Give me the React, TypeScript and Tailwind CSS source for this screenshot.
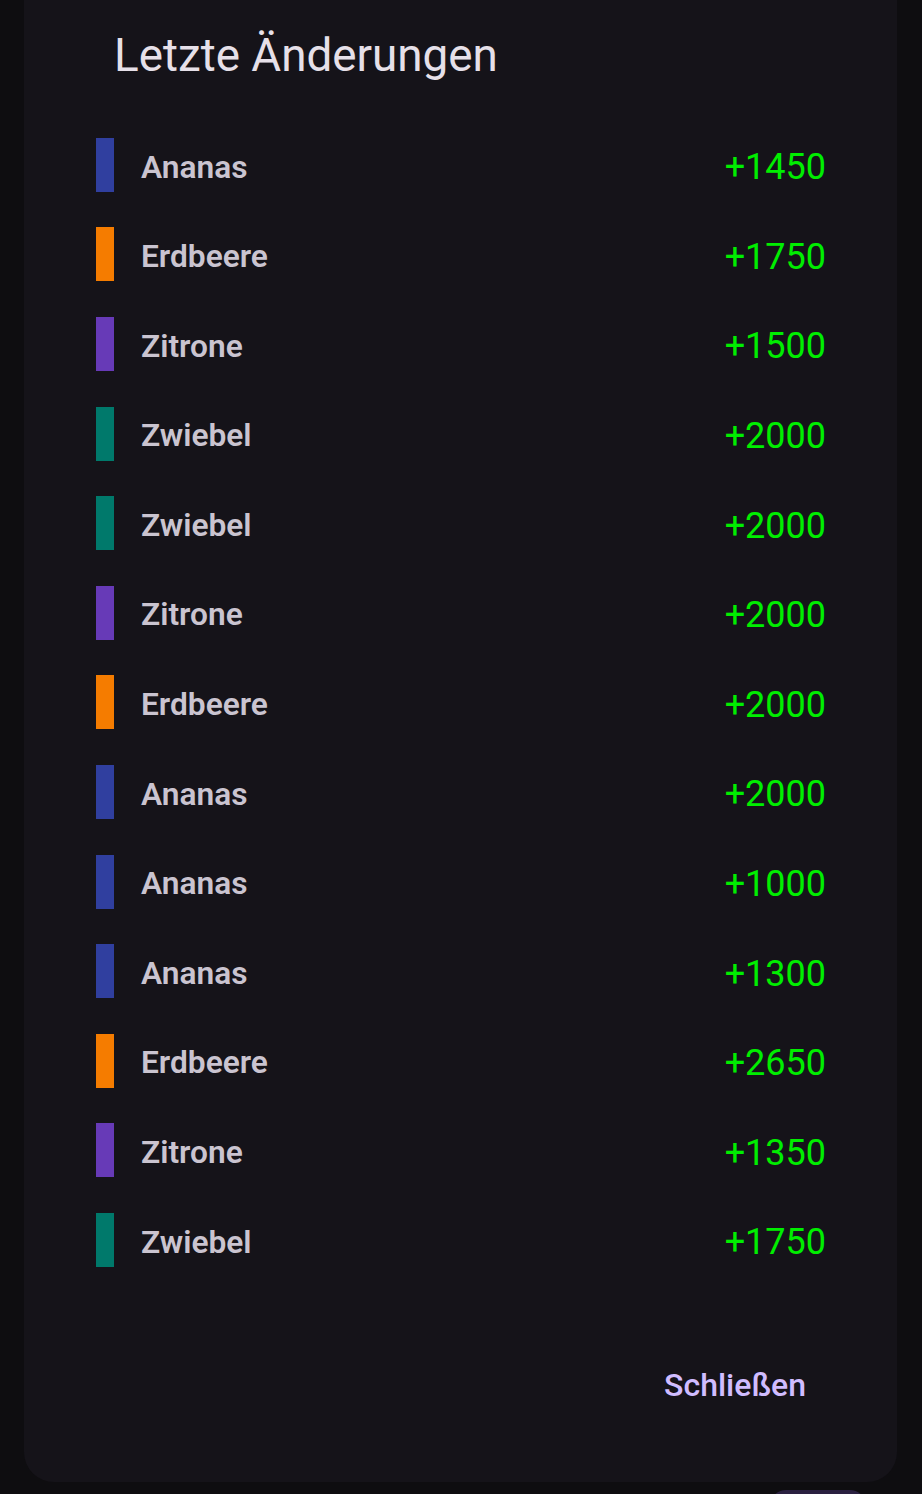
import React from "react";

type Change = {
  name: string;
  color: string;
  amount: number;
};

const colors: Record<string, string> = {
  Ananas: "bg-[#303f9f]",
  Erdbeere: "bg-[#f57c00]",
  Zitrone: "bg-[#673ab7]",
  Zwiebel: "bg-[#00796b]",
};

const changes: Change[] = [
  { name: "Ananas", color: colors.Ananas, amount: 1450 },
  { name: "Erdbeere", color: colors.Erdbeere, amount: 1750 },
  { name: "Zitrone", color: colors.Zitrone, amount: 1500 },
  { name: "Zwiebel", color: colors.Zwiebel, amount: 2000 },
  { name: "Zwiebel", color: colors.Zwiebel, amount: 2000 },
  { name: "Zitrone", color: colors.Zitrone, amount: 2000 },
  { name: "Erdbeere", color: colors.Erdbeere, amount: 2000 },
  { name: "Ananas", color: colors.Ananas, amount: 2000 },
  { name: "Ananas", color: colors.Ananas, amount: 1000 },
  { name: "Ananas", color: colors.Ananas, amount: 1300 },
  { name: "Erdbeere", color: colors.Erdbeere, amount: 2650 },
  { name: "Zitrone", color: colors.Zitrone, amount: 1350 },
  { name: "Zwiebel", color: colors.Zwiebel, amount: 1750 },
];

function ChangeRow({ change }: { change: Change }) {
  return (
    <div className="flex h-[89.6px] items-center">
      <div className={`h-[54px] w-[18px] ${change.color}`} />
      <p className="ml-[27px] flex-1 pt-[5px] text-[31.7px] font-semibold text-[#cac4d0]">
        {change.name}
      </p>
      <p className="pt-[5px] text-[36px] text-[#00ee00]">+{change.amount}</p>
    </div>
  );
}

export default function App() {
  return (
    <div
      className="h-[1494px] w-[922px] overflow-hidden bg-[#0e0d10]"
      style={{ fontFamily: "Roboto, 'Noto Sans', sans-serif" }}
    >
      <div className="ml-[24px] w-[873px] rounded-b-[30px] bg-[#151319] pb-[69px] pt-[28px]">
        <h2 className="px-[90px] text-[45.8px] leading-[56px] text-[#e6e0e9]">
          Letzte Änderungen
        </h2>
        <div className="mt-[36px] pl-[72px] pr-[71px]">
          {changes.map((c, i) => (
            <ChangeRow key={i} change={c} />
          ))}
        </div>
        <div className="mt-[72px] flex justify-end px-[91px]">
          <button className="h-[56px] text-[32px] font-medium text-[#d0bcff]">
            Schließen
          </button>
        </div>
      </div>
      <div className="mt-[8px] flex justify-end pr-[56px]">
        <div className="h-[20px] w-[96px] rounded-t-[16px] bg-[#2a2040]" />
      </div>
    </div>
  );
}
